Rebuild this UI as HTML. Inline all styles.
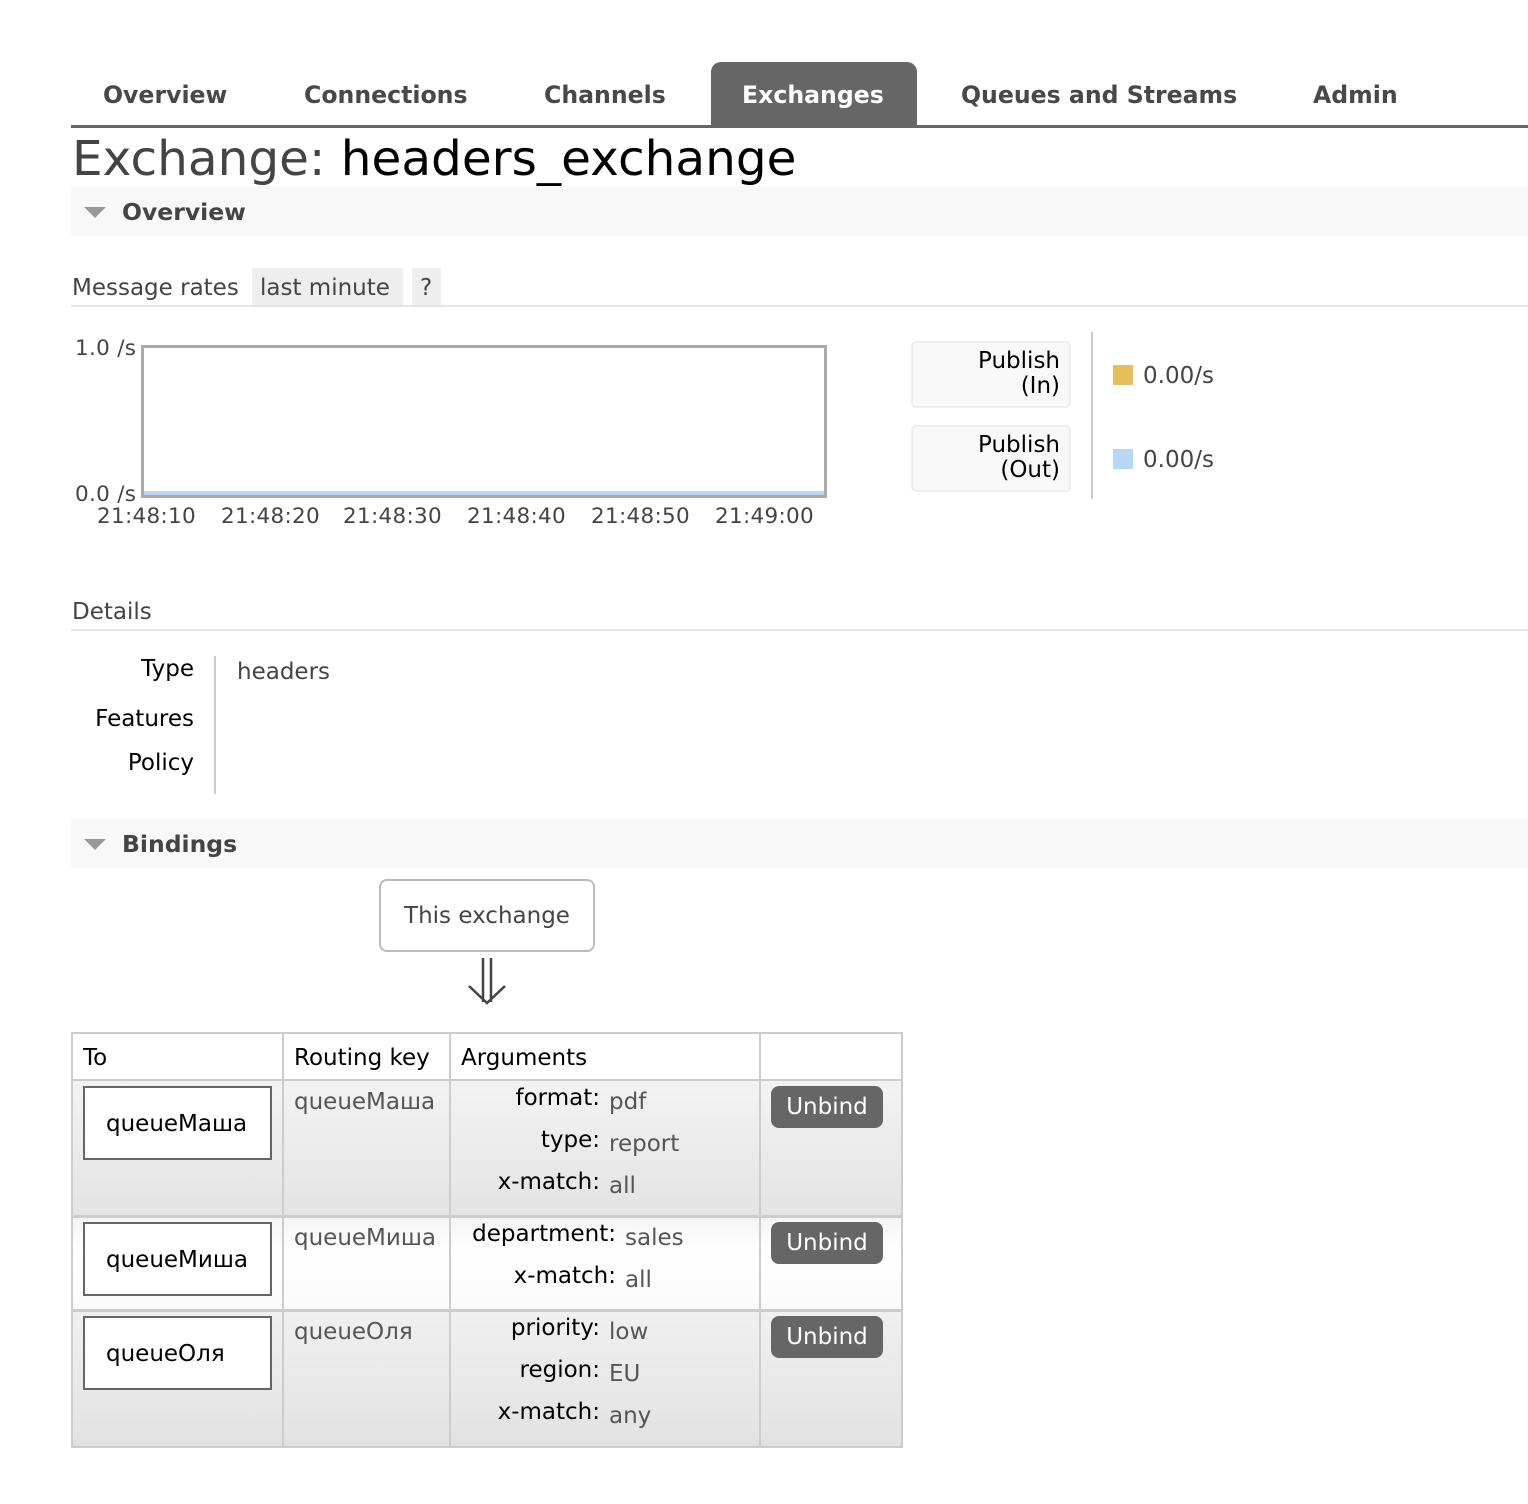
<!DOCTYPE html>
<html><head><meta charset="utf-8"><style>
*{margin:0;padding:0;box-sizing:border-box}
body{width:1528px;height:1504px;background:#fff;font-family:"DejaVu Sans","Liberation Sans",sans-serif;color:#000;position:relative;overflow:hidden}
.a{position:absolute;white-space:nowrap;line-height:30px}
.nav{font-weight:bold;font-size:23.6px;color:#484848;top:80px}
.bar{position:absolute;left:71px;width:1457px;height:50px;background:#f8f8f8}
.tri{position:absolute;width:0;height:0;border-left:11px solid transparent;border-right:11px solid transparent;border-top:11px solid #999}
.hd{font-weight:bold;font-size:23.5px;color:#444}
.b{font-size:23px}
.g{color:#444}
.cl{font-size:21.5px;color:#444;letter-spacing:0.3px}
.hl{position:absolute;height:2px;background:#e4e4e4}
.lg{position:absolute;left:911px;width:160px;height:67px;background:#f8f8f8;border:2px solid #eee;border-radius:5px;font-size:23px;text-align:right;padding:6px 9px 0 0;line-height:25px}
.sw{position:absolute;left:1113px;width:20px;height:20px}
.qb{position:absolute;left:83px;width:189px;height:74px;border:2px solid #666;background:#fff;font-size:23px;line-height:72px;padding-left:21px}
.ub{position:absolute;left:771px;width:112px;height:42px;background:#666;border-radius:8px;color:#fff;font-size:23px;text-align:center;line-height:43px}
.k{font-size:23px;text-align:right;width:200px}
.v{font-size:23px;color:#555}
</style></head><body>

<div style="position:absolute;left:711px;top:62px;width:206px;height:65px;background:#666;border-radius:10px 10px 0 0"></div>
<div class="a nav" style="left:103px">Overview</div>
<div class="a nav" style="left:304px">Connections</div>
<div class="a nav" style="left:544px">Channels</div>
<div class="a nav" style="left:742px;color:#fff">Exchanges</div>
<div class="a nav" style="left:961px">Queues and Streams</div>
<div class="a nav" style="left:1313px">Admin</div>
<div style="position:absolute;left:71px;top:125px;width:1457px;height:3px;background:#666"></div>

<div class="a" style="left:72px;top:131px;font-size:48.5px;line-height:56px;color:#444">Exchange: <span style="color:#000">headers_exchange</span></div>

<div class="bar" style="top:186px"></div>
<div class="tri" style="left:84px;top:207px"></div>
<div class="a hd" style="left:122px;top:197px">Overview</div>

<div style="position:absolute;left:252px;top:268px;width:151px;height:38px;background:#eee"></div>
<div style="position:absolute;left:412px;top:268px;width:29px;height:38px;background:#eee"></div>
<div class="a b g" style="left:72px;top:273px">Message rates</div>
<div class="a b g" style="left:260px;top:273px">last minute</div>
<div class="a b g" style="left:420px;top:273px">?</div>
<div class="hl" style="left:71px;top:305px;width:1457px"></div>

<div class="a cl" style="left:75px;top:334px">1.0 /s</div>
<div class="a cl" style="left:75px;top:480px">0.0 /s</div>
<div style="position:absolute;left:141px;top:345px;width:686px;height:153px;border:3px solid #aaa;background:#fff"></div>
<div style="position:absolute;left:144px;top:491px;width:680px;height:4px;background:#b8d6f5"></div>
<div class="a cl" style="left:97px;top:502px">21:48:10</div>
<div class="a cl" style="left:221px;top:502px">21:48:20</div>
<div class="a cl" style="left:343px;top:502px">21:48:30</div>
<div class="a cl" style="left:467px;top:502px">21:48:40</div>
<div class="a cl" style="left:591px;top:502px">21:48:50</div>
<div class="a cl" style="left:715px;top:502px">21:49:00</div>

<div class="lg" style="top:341px">Publish<br>(In)</div>
<div class="lg" style="top:425px">Publish<br>(Out)</div>
<div style="position:absolute;left:1091px;top:332px;width:2px;height:167px;background:#ccc"></div>
<div class="sw" style="top:365px;background:#e5c05a"></div>
<div class="sw" style="top:449px;background:#b8d6f5"></div>
<div class="a b g" style="left:1143px;top:361px">0.00/s</div>
<div class="a b g" style="left:1143px;top:445px">0.00/s</div>

<div class="a b g" style="left:72px;top:597px">Details</div>
<div class="hl" style="left:71px;top:629px;width:1457px"></div>
<div class="a b" style="left:0;width:194px;text-align:right;top:654px">Type</div>
<div class="a b" style="left:0;width:194px;text-align:right;top:704px">Features</div>
<div class="a b" style="left:0;width:194px;text-align:right;top:748px">Policy</div>
<div style="position:absolute;left:214px;top:656px;width:2px;height:138px;background:#ccc"></div>
<div class="a b g" style="left:237px;top:657px">headers</div>

<div class="bar" style="top:818px"></div>
<div class="tri" style="left:84px;top:839px"></div>
<div class="a hd" style="left:122px;top:829px">Bindings</div>

<div style="position:absolute;left:379px;top:879px;width:216px;height:73px;border:2px solid #bbb;border-radius:8px;font-size:23px;color:#444;text-align:center;line-height:71px">This exchange</div>
<svg style="position:absolute;left:466px;top:956px" width="42" height="50" viewBox="0 0 42 50"><g stroke="#444" stroke-width="2.5" fill="none"><path d="M17 2V46M25 2V46M3 30L21 47L39 30"/></g></svg>

<div style="position:absolute;left:71px;top:1032px;width:832px;height:416px;border:2px solid #ccc;background:#fff"></div>
<div style="position:absolute;left:73px;top:1080px;width:828px;height:136px;background:linear-gradient(#f3f3f3,#e3e3e3)"></div>
<div style="position:absolute;left:73px;top:1216px;width:828px;height:94px;background:linear-gradient(#f4f4f4,#fff 40%,#fafafa)"></div>
<div style="position:absolute;left:73px;top:1310px;width:828px;height:136px;background:linear-gradient(#f0f0f0,#e2e2e2)"></div>
<div style="position:absolute;left:73px;top:1079px;width:828px;height:2px;background:#ccc"></div>
<div style="position:absolute;left:73px;top:1215px;width:828px;height:3px;background:#ccc"></div>
<div style="position:absolute;left:73px;top:1309px;width:828px;height:3px;background:#ccc"></div>
<div style="position:absolute;left:282px;top:1034px;width:2px;height:412px;background:#ccc"></div>
<div style="position:absolute;left:449px;top:1034px;width:2px;height:412px;background:#ccc"></div>
<div style="position:absolute;left:759px;top:1034px;width:2px;height:412px;background:#ccc"></div>

<div class="a b" style="left:83px;top:1043px">To</div>
<div class="a b" style="left:294px;top:1043px">Routing key</div>
<div class="a b" style="left:461px;top:1043px">Arguments</div>

<div class="qb" style="top:1086px">queueМаша</div>
<div class="qb" style="top:1222px">queueМиша</div>
<div class="qb" style="top:1316px">queueОля</div>

<div class="a b" style="left:294px;top:1087px;color:#555">queueМаша</div>
<div class="a b" style="left:294px;top:1223px;color:#555">queueМиша</div>
<div class="a b" style="left:294px;top:1317px;color:#555">queueОля</div>

<div class="a k" style="left:400px;top:1083px">format:</div><div class="a v" style="left:609px;top:1087px">pdf</div>
<div class="a k" style="left:400px;top:1125px">type:</div><div class="a v" style="left:609px;top:1129px">report</div>
<div class="a k" style="left:400px;top:1167px">x-match:</div><div class="a v" style="left:609px;top:1171px">all</div>

<div class="a k" style="left:416px;top:1219px">department:</div><div class="a v" style="left:625px;top:1223px">sales</div>
<div class="a k" style="left:416px;top:1261px">x-match:</div><div class="a v" style="left:625px;top:1265px">all</div>

<div class="a k" style="left:400px;top:1313px">priority:</div><div class="a v" style="left:609px;top:1317px">low</div>
<div class="a k" style="left:400px;top:1355px">region:</div><div class="a v" style="left:609px;top:1359px">EU</div>
<div class="a k" style="left:400px;top:1397px">x-match:</div><div class="a v" style="left:609px;top:1401px">any</div>

<div class="ub" style="top:1086px">Unbind</div>
<div class="ub" style="top:1222px">Unbind</div>
<div class="ub" style="top:1316px">Unbind</div>
</body></html>
